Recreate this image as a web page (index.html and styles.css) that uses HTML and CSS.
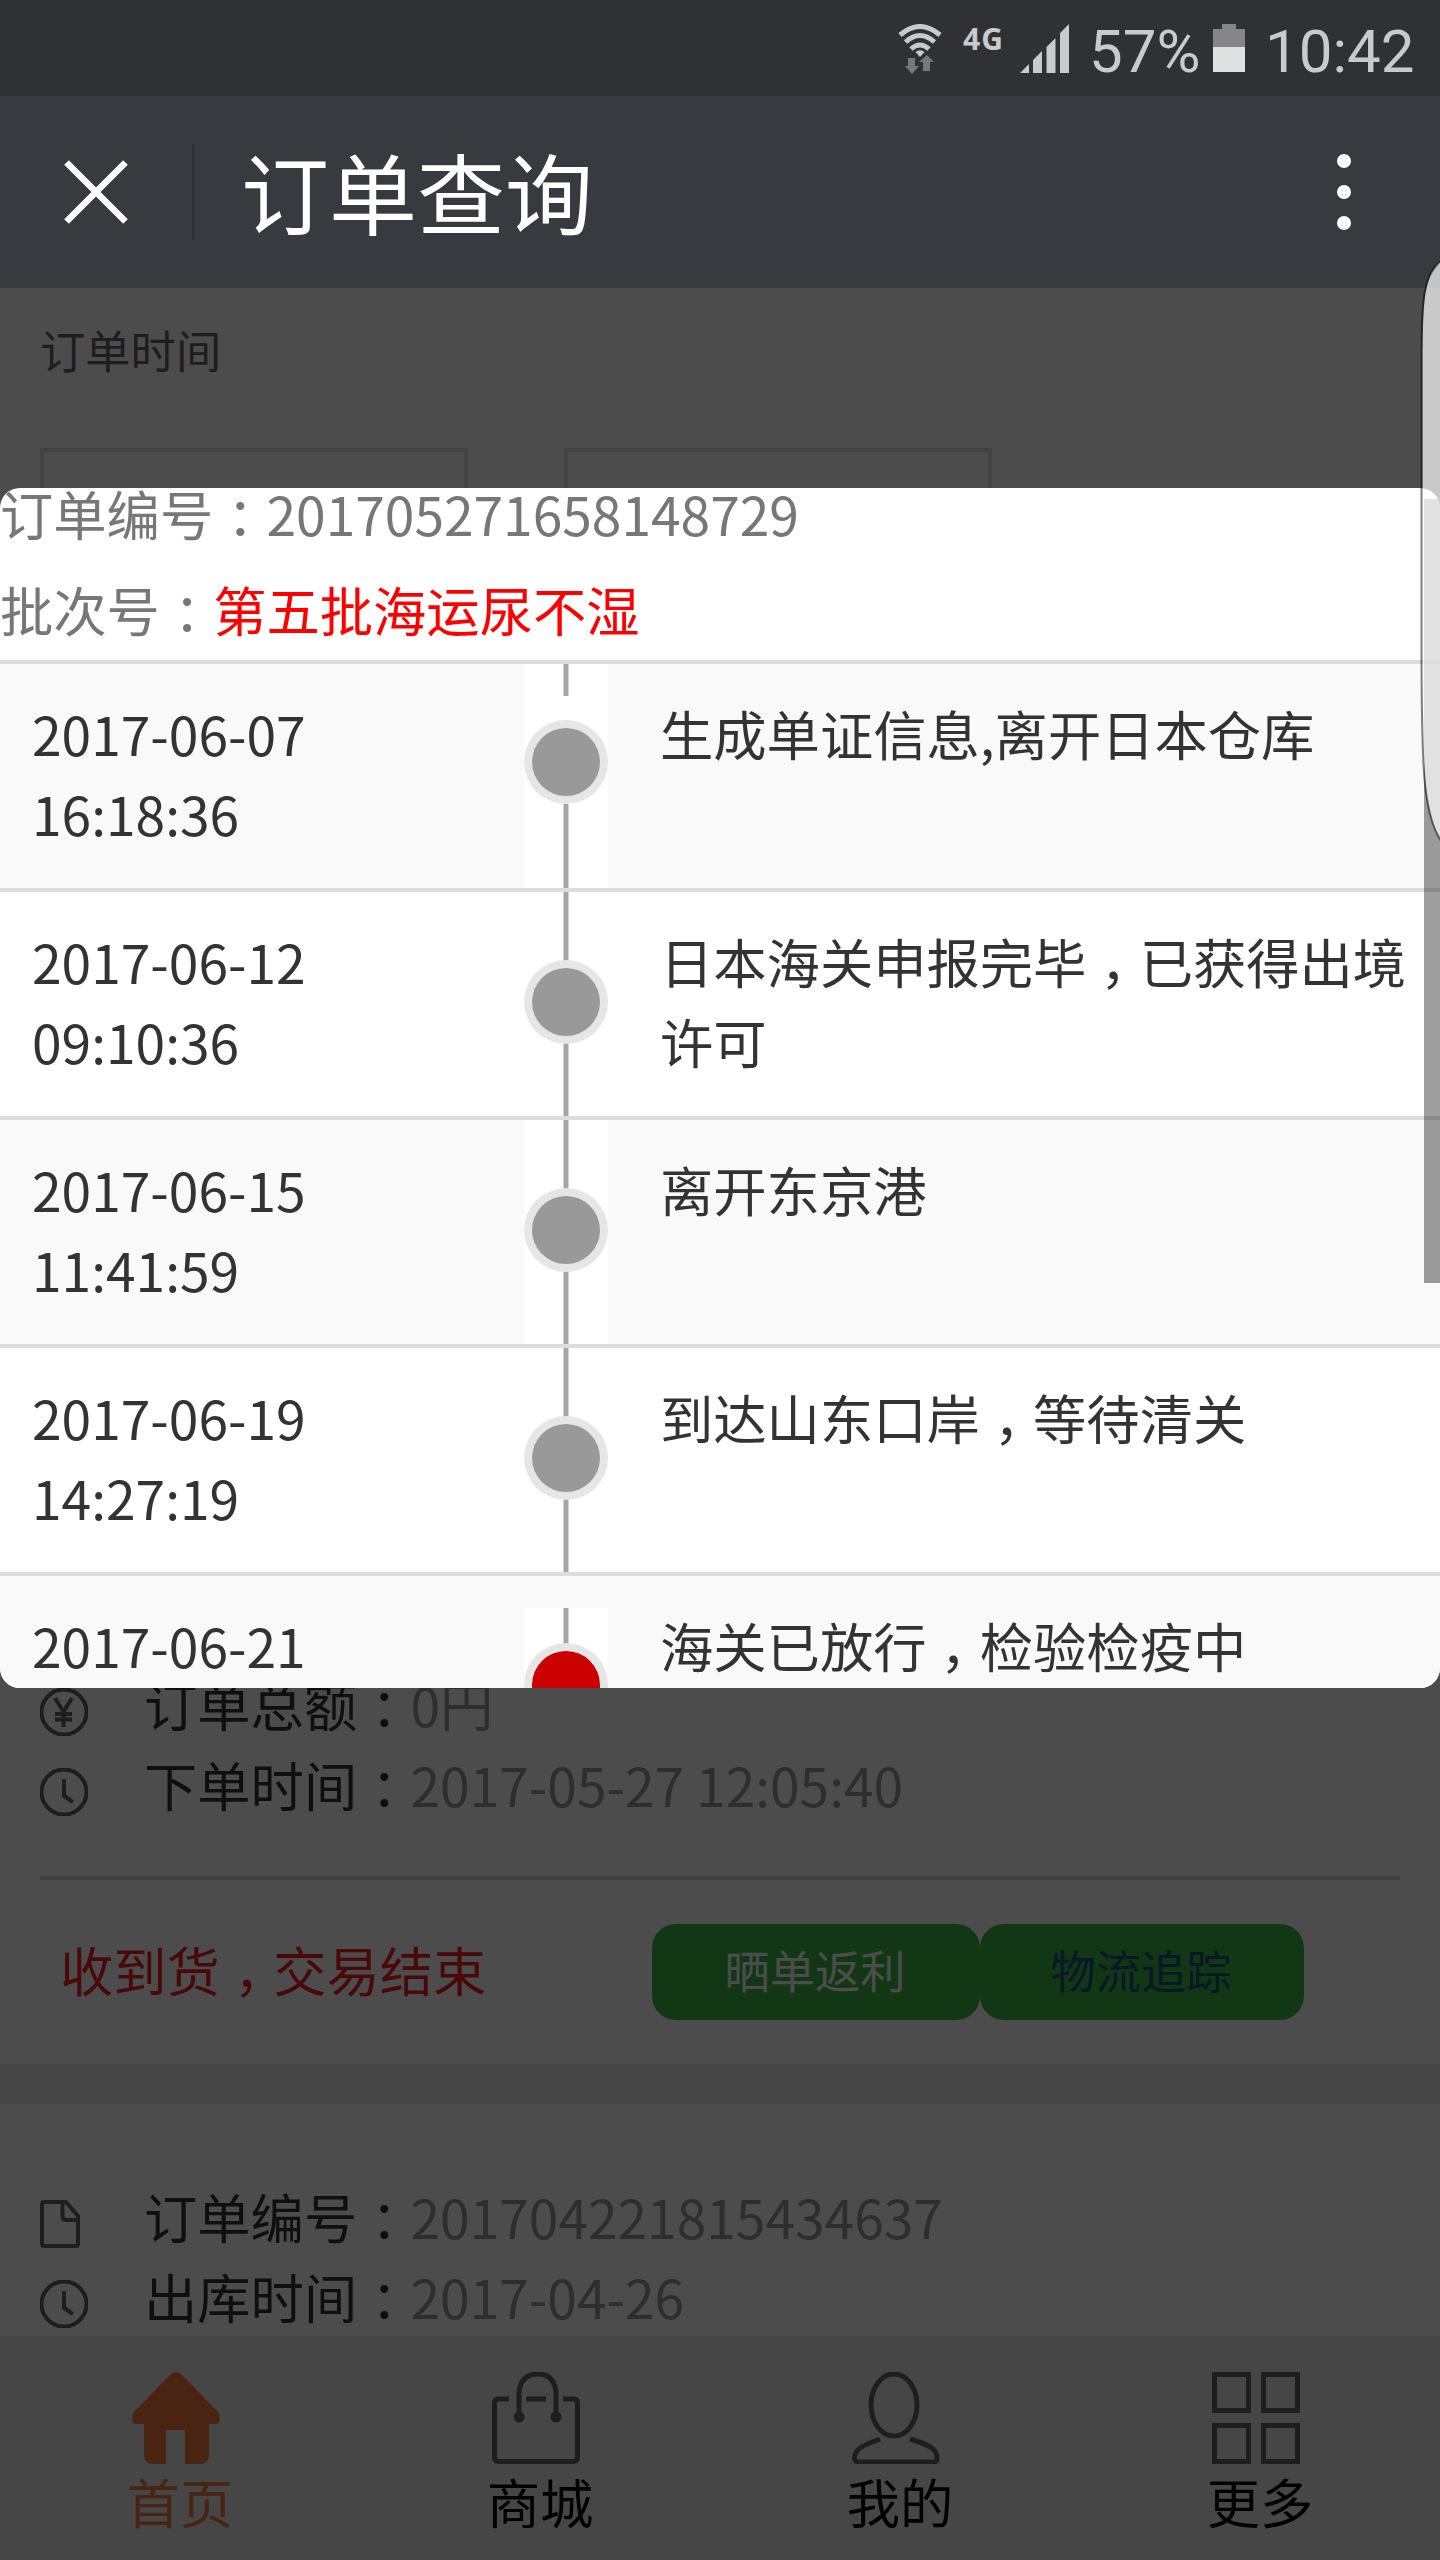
FILE: index.html
```html
<!DOCTYPE html>
<html lang="zh-CN">
<head>
  <meta charset="UTF-8">
  <meta name="viewport" content="width=device-width, initial-scale=1.0">
  <title>订单查询</title>
  <link rel="stylesheet" href="styles.css">
</head>
<body>
  <!-- status bar -->
  <div class="status">
    <svg class="wifi" width="44" height="50" viewBox="0 0 44 50">
      <g fill="none" stroke="#c9cacc" stroke-width="5">
        <path d="M2 11Q22 -6 42 11"/>
        <path d="M7.500 18Q22 5 36.500 18"/>
        <path d="M13 25Q22 17 31 25"/>
      </g>
      <path d="M17.500 28Q22 24.500 26.500 28L22 33z" fill="#c9cacc"/>
      <path d="M10 34h7v8h4l-7 8-7-8h3zM25 47v-9h-4l8-7 7 7h-4v9z" fill="#77787a"/>
    </svg>
    <span class="net">4G</span>
    <svg class="signal" width="50" height="50" viewBox="0 0 50 50" fill="#c9cacc">
      <path d="M0 49l9-9v9zM13 49V36l9-9v22zM26.500 49V23l9-9v35zM40 49V9l9-9v49z"/>
    </svg>
    <span class="percent">57%</span>
    <svg class="battery" width="32" height="48" viewBox="0 0 32 48">
      <path d="M0 5h9V0h14v5h9v18H0z" fill="#858587"/>
      <path d="M0 23h32v25H0z" fill="#dfe0e0"/>
    </svg>
    <span class="time">10:42</span>
  </div>

  <!-- title bar -->
  <div class="header">
    <svg class="close" width="64" height="64" viewBox="0 0 64 64" stroke="#fff" stroke-width="6.500">
      <path d="M2.500 2.500l59 59M61.500 2.500l-59 59"/>
    </svg>
    <h1>订单查询</h1>
    <svg class="more" width="14" height="76" viewBox="0 0 14 76" fill="#fff">
      <circle cx="7" cy="7" r="7"/><circle cx="7" cy="38" r="7"/><circle cx="7" cy="69" r="7"/>
    </svg>
  </div>

  <div class="page">
    <div class="search">
      <label>订单时间</label>
      <div class="inputs">
        <div class="input"></div>
        <div class="input"></div>
      </div>
    </div>

    <div class="order first">
      <ul>
        <li>
          <svg width="48" height="48" viewBox="0 0 48 48" class="line-icon"><circle cx="24" cy="24" r="22.500"/><path d="M15 10l8.500 14L32 10M23.500 24v15M15 26h17M15 31.500h17"/></svg>
          <b>订单总额<i>：</i></b><span>0円</span>
        </li>
        <li>
          <svg width="48" height="48" viewBox="0 0 48 48" class="line-icon"><circle cx="24" cy="24" r="22.500"/><path d="M24 11v17l9 6"/></svg>
          <b>下单时间<i>：</i></b><span>2017-05-27 12:05:40</span>
        </li>
      </ul>
      <div class="actions">
        <p>收到货<i>，</i>交易结束</p>
        <button class="btn wide">晒单返利</button>
        <button class="btn link">物流追踪</button>
      </div>
    </div>

    <div class="order">
      <ul>
        <li>
          <svg width="48" height="48" viewBox="0 0 48 48" class="line-icon"><path d="M4 2h22l12 14v28q0 2-2 2H4q-2 0-2-2V4q0-2 2-2zM22.500 2v14q0 4 4 4H38"/></svg>
          <b>订单编号<i>：</i></b><span>201704221815434637</span>
        </li>
        <li>
          <svg width="48" height="48" viewBox="0 0 48 48" class="line-icon"><circle cx="24" cy="24" r="22.500"/><path d="M24 11v17l9 6"/></svg>
          <b>出库时间<i>：</i></b><span>2017-04-26</span>
        </li>
      </ul>
    </div>
  </div>

  <!-- tab bar -->
  <div class="tabs">
    <a class="active">
      <svg width="88" height="92" viewBox="0 0 88 92"><path d="M39 2q5-4 10 0l37 38q2 3 2 7 0 5-5 5h-6v31q0 9-9 9H53V58H34v34H21q-9 0-9-9V52H5q-5 0-5-5 0-4 2-7z" fill="#f7783c"/></svg>
      首页
    </a>
    <a>
      <svg width="88" height="92" viewBox="0 0 88 92" class="tab-icon"><path d="M17 27H6q-3.500 0-3.500 4v54q0 4.500 4 4.500h75q4 0 4-4.500V31q0-4-4-4H71M34 27h20M27 44V20Q29 2 46 2q16 0 18 18v24"/><circle cx="27" cy="45" r="3"/><circle cx="64" cy="45" r="3"/></svg>
      商城
    </a>
    <a>
      <svg width="88" height="92" viewBox="0 0 88 92" class="tab-icon"><ellipse cx="42" cy="33" rx="23" ry="31"/><path d="M28 67Q8 74 5 79q-4 6-2 9 1 2 4 2h74q4 0 4-3 0-6-3-9-4-5-24-11"/></svg>
      我的
    </a>
    <a>
      <svg width="88" height="92" viewBox="0 0 88 92" class="tab-icon"><path d="M2.500 2.500h34v36h-34zM51.500 2.500h34v36h-34zM2.500 53.500h34v36h-34zM51.500 53.500h34v36h-34z"/></svg>
      更多
    </a>
  </div>

  <div class="mask"></div>

  <!-- logistics popup -->
  <div class="popup">
    <div class="info">
      <p>订单编号<i>：</i>201705271658148729</p>
      <p>批次号<i>：</i><em>第五批海运尿不湿</em></p>
    </div>
    <div class="row">
      <div class="date">2017-06-07 16:18:36</div>
      <div class="step">
        <svg width="84" height="224" viewBox="0 0 84 224"><path class="track" d="M42 0v32M42 140v84"/><circle class="halo" cx="42" cy="98" r="42"/><circle class="dot" cx="42" cy="98" r="34"/></svg>
      </div>
      <div class="text">生成单证信息,离开日本仓库</div>
    </div>
    <div class="row">
      <div class="date">2017-06-12 09:10:36</div>
      <div class="step">
        <svg width="84" height="224" viewBox="0 0 84 224"><path class="track" d="M42 0v224"/><circle class="halo" cx="42" cy="110" r="42"/><circle class="dot" cx="42" cy="110" r="34"/></svg>
      </div>
      <div class="text">日本海关申报完毕<i>，</i>已获得出境许可</div>
    </div>
    <div class="row">
      <div class="date">2017-06-15 11:41:59</div>
      <div class="step">
        <svg width="84" height="224" viewBox="0 0 84 224"><path class="track" d="M42 0v224"/><circle class="halo" cx="42" cy="110" r="42"/><circle class="dot" cx="42" cy="110" r="34"/></svg>
      </div>
      <div class="text">离开东京港</div>
    </div>
    <div class="row">
      <div class="date">2017-06-19 14:27:19</div>
      <div class="step">
        <svg width="84" height="224" viewBox="0 0 84 224"><path class="track" d="M42 0v224"/><circle class="halo" cx="42" cy="110" r="42"/><circle class="dot" cx="42" cy="110" r="34"/></svg>
      </div>
      <div class="text">到达山东口岸<i>，</i>等待清关</div>
    </div>
    <div class="row current">
      <div class="date">2017-06-21</div>
      <div class="step">
        <svg width="84" height="160" viewBox="0 0 84 160"><path class="track" d="M42 0v36"/><circle class="halo" cx="42" cy="77" r="42"/><circle class="dot" cx="42" cy="77" r="34"/></svg>
      </div>
      <div class="text">海关已放行<i>，</i>检验检疫中</div>
    </div>
    <div class="scrollbar"></div>
  </div>

  <!-- edge panel handle -->
  <svg class="edge" width="22" height="584" viewBox="0 0 22 584">
    <path d="M24 0C6 14 5 40 4.500 90V400C4.500 500 5 555 24 582z" fill="#fff" fill-opacity=".7"/>
    <path d="M24 0C5 14 4 40 3.500 90V400C4 500 4 555 24 582" fill="none" stroke="#000" stroke-opacity=".5" stroke-width="2"/>
  </svg>
</body>
</html>
```
FILE: styles.css
```css
* {
  box-sizing: border-box;
}

body {
  margin: 0;
  position: relative;
  height: 2560px;
  overflow: hidden;
  display: flex;
  flex-direction: column;
  font-family: "Noto Sans CJK SC", sans-serif;
  font-size: 53.3px;
  line-height: 80px;
  color: #333;
  background: #fff;
}

p, h1, ul {
  margin: 0;
  padding: 0;
  list-style: none;
}

svg {
  display: block;
  flex: none;
}

/* full-width punctuation sits in the middle of its cell */
i {
  display: inline-block;
  width: 1em;
  text-indent: 0.26em;
  font-style: normal;
}

/* status bar */
.status {
  height: 96px;
  flex: none;
  display: flex;
  justify-content: flex-end;
  align-items: flex-start;
  padding: 24px 22px 0 0;
  background: #303135;
  color: #c9cacc;
  font-family: Roboto, sans-serif;
  font-size: 60px;
  line-height: 55px;
}

.net {
  width: 40px;
  margin: 0 17px 0 21px;
  font-family: "Noto Sans", sans-serif;
  font-size: 30px;
  font-weight: bold;
  line-height: 30px;
  letter-spacing: 1px;
}

.percent {
  width: 113px;
  margin: 0 11px 0 19px;
}

.time {
  width: 153px;
  margin-left: 20px;
}

/* title bar */
.header {
  height: 192px;
  flex: none;
  display: flex;
  align-items: center;
  padding: 0 89px 0 64px;
  background: #393a3f;
  color: #fff;
}

h1 {
  flex: 1;
  height: 96px;
  margin-left: 64px;
  padding-left: 47px;
  border-left: 2px solid #2e2f33;
  font-size: 88px;
  font-weight: 400;
  line-height: 91px;
}

.page {
  flex: 1;
  min-height: 0;
  overflow: hidden;
  background: #ebebeb;
}

.search {
  height: 1376px;
  padding: 21px 40px;
  background: #fff;
  color: #666;
  font-size: 45.3px;
}

.search label {
  display: block;
}

.inputs {
  display: flex;
  gap: 96px;
  margin-top: 59px;
}

.input {
  width: 428px;
  height: 120px;
  border: 4px solid #dedede;
}

.order {
  padding: 72px 40px 0;
  margin-top: 40px;
  height: 420px;
  background: #fff;
}

.order.first {
  margin-top: 0;
  padding-top: 0;
  height: 400px;
}

.order li {
  display: flex;
  align-items: center;
  height: 80px;
}

.order b {
  margin-left: 56px;
  font-weight: 400;
}

.order span {
  color: #999;
}

.line-icon {
  fill: none;
  stroke: #666;
  stroke-width: 4;
  margin-top: 16px;
}

.actions {
  display: flex;
  align-items: center;
  margin-top: 52px;
  padding: 44px 20px 0;
  border-top: 4px solid #dadada;
}

.actions p {
  width: 592px;
  padding-bottom: 6px;
  color: #f52020;
}

.btn {
  width: 324px;
  height: 96px;
  padding: 0 2px 6px 0;
  border: 0;
  border-radius: 24px;
  background: #3cb743;
  color: #fff;
  font: 45.3px/90px "Noto Sans CJK SC", sans-serif;
}

.btn.wide {
  width: 328px;
}

.btn.link {
  color: #205080;
}

/* tab bar */
.tabs {
  height: 224px;
  flex: none;
  display: flex;
  background: #ebebeb;
  color: #000;
}

.tabs a {
  flex: 1;
  padding-top: 36px;
  line-height: 74px;
  text-align: center;
}

.tabs a svg {
  margin: 0 auto 0 132px;
}

.tabs .active {
  color: #f7783c;
}

.tab-icon {
  fill: none;
  stroke: #666;
  stroke-width: 5;
}

.mask {
  position: absolute;
  top: 288px;
  right: 0;
  bottom: 0;
  left: 0;
  background: rgba(0, 0, 0, 0.7);
}

/* popup */
.popup {
  position: absolute;
  top: 488px;
  left: 0;
  width: 1440px;
  height: 1200px;
  overflow: hidden;
  border-radius: 20px;
  background: #fff;
}

.info {
  display: flex;
  flex-direction: column;
  gap: 46px;
  height: 172px;
  color: #777;
}

.info p {
  line-height: 50px;
}

.info em {
  color: #f00;
  font-style: normal;
}

.row {
  display: flex;
  height: 228px;
  border-top: 4px solid #ddd;
}

.row:nth-child(even) {
  background: #f9f9f9;
}

.date {
  width: 524px;
  padding: 29px 200px 29px 32px;
}

.step {
  width: 84px;
  background: #fff;
}

.text {
  width: 832px;
  padding: 29px 32px 29px 52px;
}

.current .step {
  margin-top: 32px;
}

.track {
  fill: none;
  stroke: #a5a5a5;
  stroke-width: 5;
}

.halo {
  fill: #e6e6e6;
}

.dot {
  fill: #999;
}

.current .dot {
  fill: #c00;
}

.scrollbar {
  position: absolute;
  top: 11px;
  right: 0;
  width: 16px;
  height: 784px;
  background: rgba(0, 0, 0, 0.38);
}

.edge {
  position: absolute;
  top: 260px;
  right: 0;
}
```
